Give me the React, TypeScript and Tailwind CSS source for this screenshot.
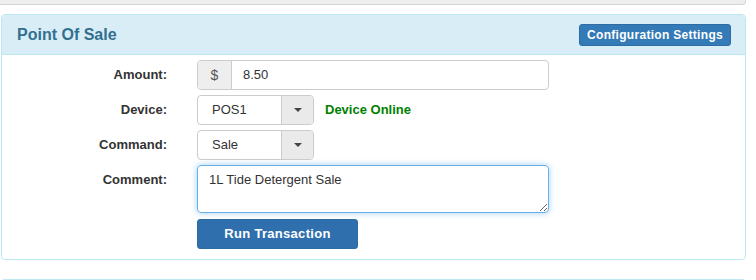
export default function App() {
  const font = { fontFamily: '"Liberation Sans", Arial, Helvetica, sans-serif' };

  const label = "w-[195px] shrink-0 pr-[30px] text-right text-[13px] font-bold text-[#333]";

  const select = (value: string) => (
    <div className="flex h-[30px] w-[117px] overflow-hidden rounded-[4px] border border-[#ccc] bg-white">
      <div className="flex flex-1 items-center pl-[14px] text-[13px] text-[#333]">{value}</div>
      <div className="flex w-[32px] items-center justify-center border-l border-[#ccc] bg-[#eaeaea]">
        <span className="h-0 w-0 border-x-[4px] border-t-[4px] border-x-transparent border-t-[#444]" />
      </div>
    </div>
  );

  return (
    <div className="h-[280px] w-[756px] overflow-hidden bg-white" style={font}>
      {/* panel above */}
      <div className="ml-[-10px] h-[5px] w-[756px] rounded-b-[4px] border-b border-r border-[#d6d6d6] bg-[#eeeeee]" />

      <div className="ml-[1px] mt-[9px] w-[745px] rounded-[4px] border border-[#bce8f1]">
        <div className="flex h-[40px] items-center justify-between rounded-t-[3px] border-b border-[#bce8f1] bg-[#d9edf7] pl-[15px] pr-[14px]">
          <h3 className="text-[16px] font-bold text-[#31708f]">Point Of Sale</h3>
          <button className="h-[22px] rounded-[3px] border border-[#2e6da4] bg-[#337ab7] px-[7px] text-[12px] font-bold tracking-[0.3px] text-white">
            Configuration Settings
          </button>
        </div>

        <div className="flex flex-col gap-[5px] pb-[10px] pt-[5px]">
          <div className="flex items-center">
            <div className={label}>Amount:</div>
            <div className="flex h-[30px] w-[352px] overflow-hidden rounded-[4px] border border-[#ccc]">
              <div className="flex w-[34px] items-center justify-center border-r border-[#ccc] bg-[#eeeeee] text-[14px] text-[#555]">
                $
              </div>
              <input
                readOnly
                value="8.50"
                className="flex-1 px-[11px] text-[13px] text-[#333] outline-none"
                style={font}
              />
            </div>
          </div>

          <div className="flex items-center">
            <div className={label}>Device:</div>
            {select("POS1")}
            <span className="ml-[11px] text-[13px] font-bold text-[#008000]">Device Online</span>
          </div>

          <div className="flex items-center">
            <div className={label}>Command:</div>
            {select("Sale")}
          </div>

          <div className="flex items-start">
            <div className={label + " pt-[5px]"}>Comment:</div>
            <textarea
              readOnly
              value="1L Tide Detergent Sale"
              className="h-[48px] w-[352px] rounded-[4px] border border-[#66afe9] px-[11px] py-[5px] text-[13px] leading-[18px] text-[#333] shadow-[0_0_6px_rgba(102,175,233,0.6)] outline-none"
              style={font}
            />
          </div>

          <div className="flex pl-[195px] pt-[1px]">
            <button className="h-[30px] w-[161px] rounded-[3px] border border-[#2e6da4] bg-[#2f6fae] text-[13px] font-bold tracking-[0.3px] text-white">
              Run Transaction
            </button>
          </div>
        </div>
      </div>

      <div className="ml-[1px] mt-[19px] h-[20px] w-[745px] rounded-t-[4px] border-x border-t border-[#bce8f1]" />
    </div>
  );
}
